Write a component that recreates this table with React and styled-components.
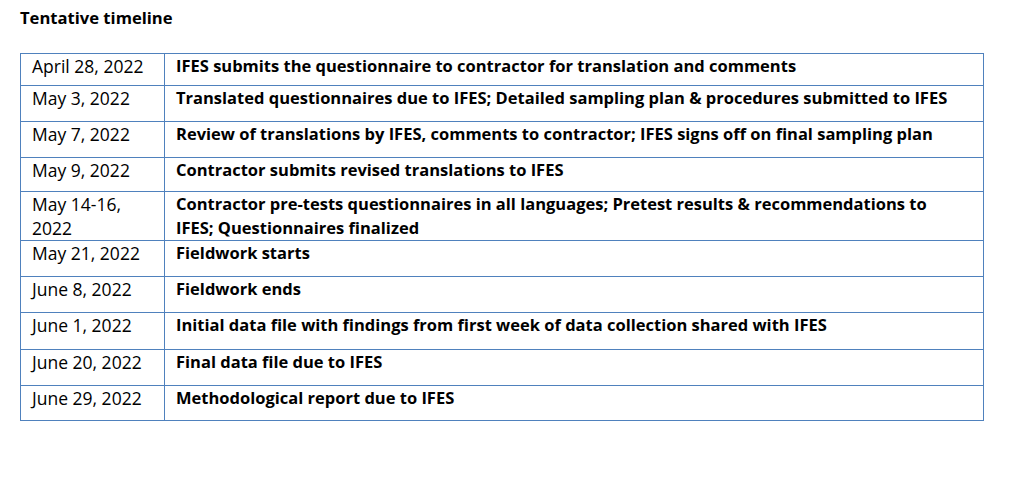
import styled, { createGlobalStyle } from 'styled-components';

const GlobalStyle = createGlobalStyle`
	body {
		margin: 0;
		background: #ffffff;
		font-family: 'Open Sans', 'Noto Sans', sans-serif;
		color: #000000;
	}
`;

const rows = [
	{ date: 'April 28, 2022', text: 'IFES submits the questionnaire to contractor for translation and comments', h: 32 },
	{ date: 'May 3, 2022', text: 'Translated questionnaires due to IFES; Detailed sampling plan & procedures submitted to IFES', h: 36 },
	{ date: 'May 7, 2022', text: 'Review of translations by IFES, comments to contractor; IFES signs off on final sampling plan', h: 36 },
	{ date: 'May 9, 2022', text: 'Contractor submits revised translations to IFES', h: 34 },
	{
		date: ['May 14-16,', '2022'],
		text: ['Contractor pre-tests questionnaires in all languages; Pretest results & recommendations to', 'IFES; Questionnaires finalized'],
		h: 49,
	},
	{ date: 'May 21, 2022', text: 'Fieldwork starts', h: 36 },
	{ date: 'June 8, 2022', text: 'Fieldwork ends', h: 36 },
	{ date: 'June 1, 2022', text: 'Initial data file with findings from first week of data collection shared with IFES', h: 37 },
	{ date: 'June 20, 2022', text: 'Final data file due to IFES', h: 36 },
	{ date: 'June 29, 2022', text: 'Methodological report due to IFES', h: 35 },
];

function lines(value) {
	if (!Array.isArray(value)) return value;
	return value.map((line, i) => (
		<span key={i}>
			{i > 0 && <br />}
			{line}
		</span>
	));
}

export default function App() {
	return (
		<Page>
			<GlobalStyle />
			<Title>Tentative timeline</Title>
			<Timeline>
				<tbody>
					{rows.map((row, index) => (
						<Row key={index} $h={row.h}>
							<DateCell>{lines(row.date)}</DateCell>
							<TaskCell>{lines(row.text)}</TaskCell>
						</Row>
					))}
				</tbody>
			</Timeline>
		</Page>
	);
}

const Page = styled.div`
	padding: 6px 0 0 20px;
	width: 964px;
`;

const Title = styled.h1`
	margin: 0;
	font-size: 16.6px;
	font-weight: 700;
	line-height: 24px;
`;

const Timeline = styled.table`
	margin-top: 23px;
	width: 964px;
	border-collapse: collapse;
	table-layout: fixed;
`;

const Row = styled.tr`
	height: ${({ $h }) => $h}px;
`;

const Cell = styled.td`
	border: 1px solid #4f81bd;
	vertical-align: top;
	padding: 0 11px;
	line-height: 24px;
	white-space: nowrap;
`;

const DateCell = styled(Cell)`
	width: 144px;
	box-sizing: border-box;
	font-size: 17.5px;
	font-weight: 400;
`;

const TaskCell = styled(Cell)`
	font-size: 16.5px;
	font-weight: 700;
`;
